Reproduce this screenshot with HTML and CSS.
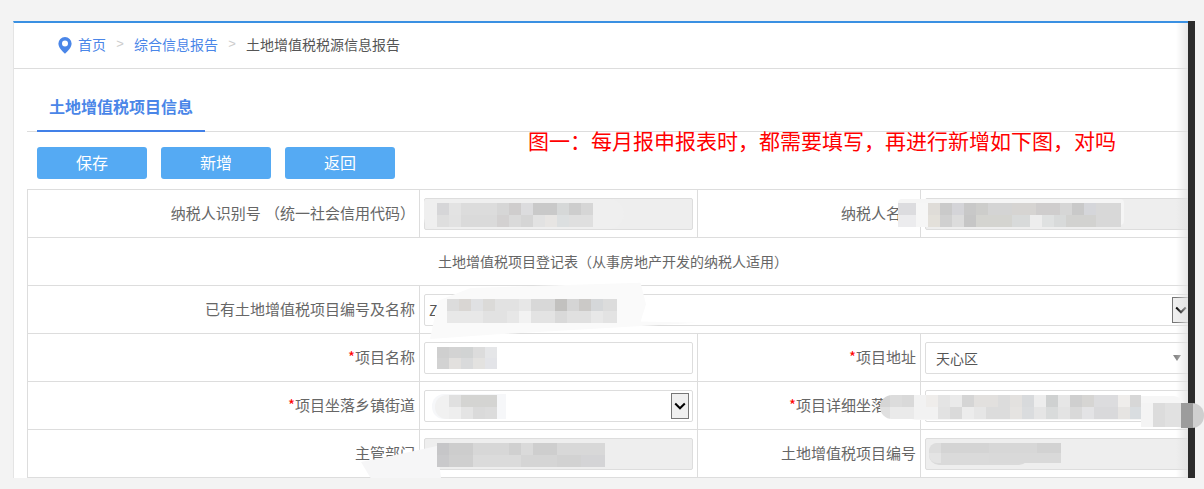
FILE: index.html
```html
<!DOCTYPE html>
<html lang="zh-CN">
<head>
<meta charset="utf-8">
<title>土地增值税项目信息</title>
<link rel="stylesheet" href="styles.css">
</head>
<body>
<div class="shell">
  <main class="panel">
    <nav class="crumbs">
      <svg class="pin" viewBox="0 0 14 17" width="14" height="17"><path fill-rule="evenodd" fill="#4a86e8" d="M7 0a6.6 6.6 0 0 1 6.6 6.6C13.600 10.800 9.500 14.500 7 16.800 4.500 14.500.4 10.800.4 6.600A6.600 6.600 0 0 1 7 0zm0 3.600a3 3 0 1 0 0 6 3 3 0 0 0 0-6z"/></svg>
      <a class="crumb-link">首页</a><span class="sep">&gt;</span>
      <a class="crumb-link">综合信息报告</a><span class="sep">&gt;</span>
      <span class="crumb-now">土地增值税税源信息报告</span>
    </nav>
    <div class="tabs"><div class="tab">土地增值税项目信息</div></div>
    <div class="actions">
      <button class="btn">保存</button>
      <button class="btn">新增</button>
      <button class="btn">返回</button>
    </div>
    <table class="form">
      <colgroup><col class="c1"><col class="c2"><col class="c3"><col class="c4"></colgroup>
      <tr>
        <td class="label">纳税人识别号&nbsp;&#8202;（统一社会信用代码）</td>
        <td class="field"><div class="input off"></div></td>
        <td class="label">纳税人名称</td>
        <td class="field"><div class="input off"></div></td>
      </tr>
      <tr><td class="title" colspan="4">土地增值税项目登记表（从事房地产开发的纳税人适用）</td></tr>
      <tr>
        <td class="label">已有土地增值税项目编号及名称</td>
        <td class="field" colspan="3"><div class="input native">Z<span class="arrow"><svg viewBox="0 0 12 8" width="12" height="8"><path d="M1.200 1.500 6 6.300l4.800-4.800" fill="none" stroke="#000" stroke-width="2"/></svg></span></div></td>
      </tr>
      <tr>
        <td class="label"><i>*</i>项目名称</td>
        <td class="field"><div class="input"></div></td>
        <td class="label"><i>*</i>项目地址</td>
        <td class="field"><div class="input combo">天心区<span class="caret"></span></div></td>
      </tr>
      <tr>
        <td class="label"><i>*</i>项目坐落乡镇街道</td>
        <td class="field"><div class="input native"><span class="arrow"><svg viewBox="0 0 12 8" width="12" height="8"><path d="M1.200 1.500 6 6.300l4.800-4.800" fill="none" stroke="#000" stroke-width="2"/></svg></span></div></td>
        <td class="label"><i>*</i>项目详细坐落地址</td>
        <td class="field"><div class="input"></div></td>
      </tr>
      <tr>
        <td class="label">主管部门</td>
        <td class="field"><div class="input off"></div></td>
        <td class="label">土地增值税项目编号</td>
        <td class="field"><div class="input off"></div></td>
      </tr>
    </table>
    <div class="fade"></div>
  </main>
  <div class="bar"></div>
</div>

<p class="note">图一：每月报申报表时，都需要填写，再进行新增如下图，对吗</p>

<div class="smudge s1"></div><div class="mosaic m1"></div>
<div class="smudge s2"></div><div class="mosaic m2"></div>
<div class="smudge s3"></div><div class="mosaic m3"></div>
<div class="mosaic m4"></div>
<div class="smudge s5"></div><div class="mosaic m5"></div>
<div class="smudge s6"></div><div class="mosaic m6"></div>
<div class="tip"></div><div class="tip-end"></div>
<div class="smudge s7"></div><div class="mosaic m7"></div>
<div class="smudge s8"></div><div class="mosaic m8"></div>
</body>
</html>
```
FILE: styles.css
```css
* { box-sizing: border-box; }
html, body { margin: 0; height: 489px; overflow: hidden; }
body {
  position: relative;
  background: #f3f3f3;
  font-family: "Noto Sans CJK SC", "Liberation Sans", sans-serif;
  font-size: 14px;
  color: #666;
}
.shell { display: flex; padding: 21px 0 0 13px; }
.panel {
  position: relative;
  width: 1175px;
  height: 457px;
  overflow: hidden;
  background: #fff;
  border-top: 2px solid #3a90e2;
  border-left: 1px solid #e4e4e4;
}
.bar { width: 7px; height: 457px; background: #2c2c2c; }

.crumbs {
  display: flex;
  align-items: center;
  height: 46px;
  padding-left: 44px;
  border-bottom: 1px solid #ddd;
  line-height: 20px;
}
.pin { margin-right: 6px; }
.crumb-link { color: #4a86e8; margin-bottom: 4px; }
.sep { width: 28px; margin-bottom: 4px; text-align: center; color: #ccc; font-family: "Liberation Sans", sans-serif; font-size: 13px; }
.crumb-now { color: #555; margin-bottom: 4px; }

.tabs {
  height: 63px;
  margin-left: 13px;
  padding-left: 10px;
  border-bottom: 1px solid #ddd;
}
.tab {
  width: 168px;
  height: 63px;
  padding: 25px 0 0 12px;
  border-bottom: 2px solid #4180e8;
  color: #4a86e8;
  font-size: 16px;
  font-weight: 700;
  line-height: 24px;
}

.actions { display: flex; gap: 14px; padding: 15px 0 10px 23px; }
.btn {
  width: 110px;
  height: 32px;
  border: 0;
  border-radius: 3px;
  background: #55aaf3;
  color: #fff;
  font: 16px/30px "Noto Sans CJK SC", sans-serif;
  padding: 0 0 2px;
}

.form {
  table-layout: fixed;
  width: 1171px;
  margin-left: 13px;
  border-collapse: collapse;
}
.c1 { width: 392px; }
.c2 { width: 278px; }
.c3 { width: 223px; }
.c4 { width: 278px; }
.form td { height: 48px; border: 1px solid #ddd; padding: 0; }
.form .label { text-align: right; padding: 0 4px 3px 0; font-size: 15px; white-space: nowrap; }
.form .field { padding: 1px 4px 0; }
.form .title { text-align: center; padding-bottom: 2px; }
.label i { color: #f00; font-style: normal; }

.input {
  position: relative;
  height: 32px;
  padding: 0 4px;
  border: 1px solid #ddd;
  border-radius: 2px;
  background: #fff;
  line-height: 30px;
  color: #555;
}
.input.off { background: #eee; }
.combo { padding-left: 10px; }
.caret {
  position: absolute;
  right: 12px;
  top: 12px;
  border: 4px solid transparent;
  border-top: 6px solid #888;
  border-bottom: 0;
}
.arrow {
  position: absolute;
  right: 3px;
  top: 2px;
  display: flex;
  align-items: center;
  justify-content: center;
  width: 18px;
  height: 26px;
  border: 1px solid #767676;
  background: #efefef;
}
.fade {
  position: absolute;
  top: 0;
  right: 0;
  bottom: 0;
  width: 12px;
  background: linear-gradient(to right, rgba(235,235,235,0), rgba(225,225,225,.8));
}

.note {
  position: absolute;
  left: 528px;
  top: 125px;
  margin: 0;
  color: #f00;
  font-size: 21px;
  line-height: 30px;
  white-space: nowrap;
}

.smudge, .mosaic, .tip, .tip-end { position: absolute; }
.smudge { background: #f7f7f7; }
.mosaic { background-repeat: no-repeat; background-size: 100% 50%; background-position: top, bottom; }

.s1 { left: 424px; top: 199px; width: 200px; height: 30px; background: #efefef; border-radius: 4px 20px 20px 14px; }
.m1 {
  left: 437px; top: 203px; width: 156px; height: 24px;
  background-image:
    linear-gradient(to right, #d6d6d8 0 12px, #e3e3e3 0 24px, #dcdcdc 0 60px, #d6d6d6 0 72px, #cfcdcd 0 84px, #dcdcde 0 96px, #c9c9c9 0 120px, #d6d8d8 0 132px, #cdcdcd 0 144px, #d6d6d6 0 156px),
    linear-gradient(to right, #dedede 0 12px, #e2e2e2 0 24px, #dadada 0 60px, #d3d1d1 0 72px, #dadada 0 84px, #d5d5d5 0 96px, #e2e2e2 0 108px, #e7e5e3 0 120px, #dcdfe0 0 132px, #dfdfdf 0 156px);
}
.s2 { left: 898px; top: 199px; width: 226px; height: 26px; background: #f5f5f5; border-radius: 4px; }
.m2 {
  left: 898px; top: 203px; width: 223px; height: 24px;
  background-image:
    linear-gradient(to right, #dcdcdf 0 18px, #f6f6f6 0 30px, #dfdcd8 0 42px, #cacaca 0 54px, #d4d4d8 0 66px, #c8c8c8 0 78px, #cdcdcb 0 90px, #d4d4d4 0 114px, #d6d4d2 0 138px, #cfcdcd 0 162px, #d6d6d6 0 174px, #c9c9c9 0 186px, #d5d6da 0 198px, #d8d8d8 0 223px),
    linear-gradient(to right, #ececee 0 18px, #f6f6f6 0 30px, #e3e0da 0 42px, #d0d0d0 0 54px, #dcdcdc 0 66px, #c6c6c6 0 78px, #d4d4d0 0 114px, #d8dada 0 132px, #ededed 0 144px, #dfe1e1 0 156px, #d8dada 0 168px, #d2d2d0 0 198px, #d8d8d8 0 223px);
}
.s3 {
  left: 430px; top: 281px; width: 270px; height: 58px; background: #fafafa;
  clip-path: polygon(3% 34%, 15% 12%, 78% 3%, 80% 40%, 78% 70%, 99% 72%, 25% 92%, 0 100%);
}
.m3 {
  left: 447px; top: 299px; width: 170px; height: 24px;
  background-image:
    linear-gradient(to right, #dcdcdc 0 12px, #d9d6d3 0 24px, #e0e1e3 0 36px, #dbdad8 0 48px, #e2e2e2 0 72px, #e7e7e7 0 84px, #d8d8d8 0 108px, #c2c1bf 0 120px, #d5d5d5 0 132px, #cbc9c7 0 144px, #d5d7d9 0 156px, #dcdcdc 0 170px),
    linear-gradient(to right, #e8e8e8 0 36px, #e2e2e2 0 60px, #e7e7e7 0 72px, #f2f2f2 0 84px, #e3e3e3 0 108px, #d9d9d9 0 120px, #e0e0e0 0 144px, #e8e8e8 0 156px, #e3e3e3 0 170px);
}
.m4 {
  left: 437px; top: 347px; width: 60px; height: 22px;
  background-image:
    linear-gradient(to right, #cfcfcf 0 12px, #d3d3d3 0 24px, #d1d3d3 0 36px, #dcdcdc 0 48px, #e5e6e8 0 60px),
    linear-gradient(to right, #d2d2d2 0 12px, #e2e0de 0 24px, #d9dadb 0 36px, #e3e2e0 0 48px, #e3e4e8 0 60px);
}
.s5 { left: 432px; top: 394px; width: 74px; height: 25px; background: #f6f7f9; border-radius: 12px 0 0 12px; }
.m5 {
  left: 435px; top: 395px; width: 62px; height: 24px;
  background-image:
    linear-gradient(to right, #f1f1f1 0 14px, #e0e0e0 0 26px, #d4d4d2 0 62px),
    linear-gradient(to right, #f1f1f1 0 14px, #eeeeee 0 26px, #e4e4e4 0 38px, #dadada 0 50px, #dcdcdc 0 62px);
  border-radius: 12px 0 0 12px;
}
.s6 { left: 905px; top: 396px; width: 280px; height: 24px; background: #f6f6f6; border-radius: 12px; }
.m6 {
  left: 880px; top: 395px; width: 261px; height: 24px;
  border-radius: 12px 0 0 12px;
  background-image:
    linear-gradient(to right, #d5d5d5 0 10px, #dcdcdc 0 22px, #d9d9d9 0 34px, #f2f2f2 0 46px, #efedeb 0 58px, #e4e4e4 0 70px, #eaeaea 0 82px, #d5d5d5 0 94px, #e2e0de 0 118px, #dcdcdc 0 130px, #e3e1df 0 142px, #d8dadc 0 154px, #ededed 0 166px, #cfd1d1 0 178px, #e6e6e6 0 190px, #cfcfcf 0 202px, #d6d5d3 0 214px, #dcdcde 0 238px, #efedeb 0 250px, #d7d7d7 0 261px),
    linear-gradient(to right, #e0e0e0 0 10px, #eaeaea 0 34px, #f2f2f2 0 58px, #e2e2e2 0 70px, #dadada 0 82px, #ececec 0 94px, #e6e6e6 0 106px, #dcdcdc 0 130px, #e5e3e1 0 142px, #dadcde 0 154px, #e5e5e5 0 166px, #d9dbdb 0 178px, #e3e3e3 0 190px, #d9d9d9 0 202px, #e3e3e5 0 214px, #d9d9db 0 238px, #e6e4e2 0 250px, #d9dde0 0 261px);
}
.tip { left: 1141px; top: 403px; width: 40px; height: 24px; background: linear-gradient(to right, #f4f4f4 0 12px, #dcdcdc 0 24px, #e1e1e1 0 40px); }
.tip-end { left: 1181px; top: 403px; width: 23px; height: 25px; border-radius: 0 12px 12px 0; background: linear-gradient(to right, #9c9c9c 0 12px, #cfcfcf 0); }
.s7 {
  left: 361px; top: 446px; width: 80px; height: 32px; background: #f6f6f7;
  clip-path: polygon(0 50%, 40% 30%, 95% 0, 100% 100%, 12% 100%);
}
.m7 {
  left: 437px; top: 443px; width: 168px; height: 24px;
  background-image:
    linear-gradient(to right, #c6c6c8 0 12px, #cdcdcd 0 36px, #d7d7d7 0 72px, #d0d0d0 0 84px, #dadada 0 96px, #cecece 0 120px, #d8d8d8 0 168px),
    linear-gradient(to right, #c9c9cb 0 12px, #cfcfcf 0 36px, #dbdbdb 0 84px, #d5d5d5 0 120px, #d2d2d2 0 144px, #d4d4d6 0 168px);
}
.s8 { left: 929px; top: 443px; width: 100px; height: 22px; background: #dadada; border-radius: 10px; }
.m8 {
  left: 929px; top: 443px; width: 132px; height: 20px;
  background-image:
    linear-gradient(to right, #dddddd 0 12px, #d4d4d4 0 60px, #d7d7d7 0 108px, #d2d2d2 0 132px),
    linear-gradient(to right, #e4e4e4 0 12px, #dadada 0 60px, #d9d9d9 0 132px);
  border-radius: 8px 0 0 8px;
}
```
